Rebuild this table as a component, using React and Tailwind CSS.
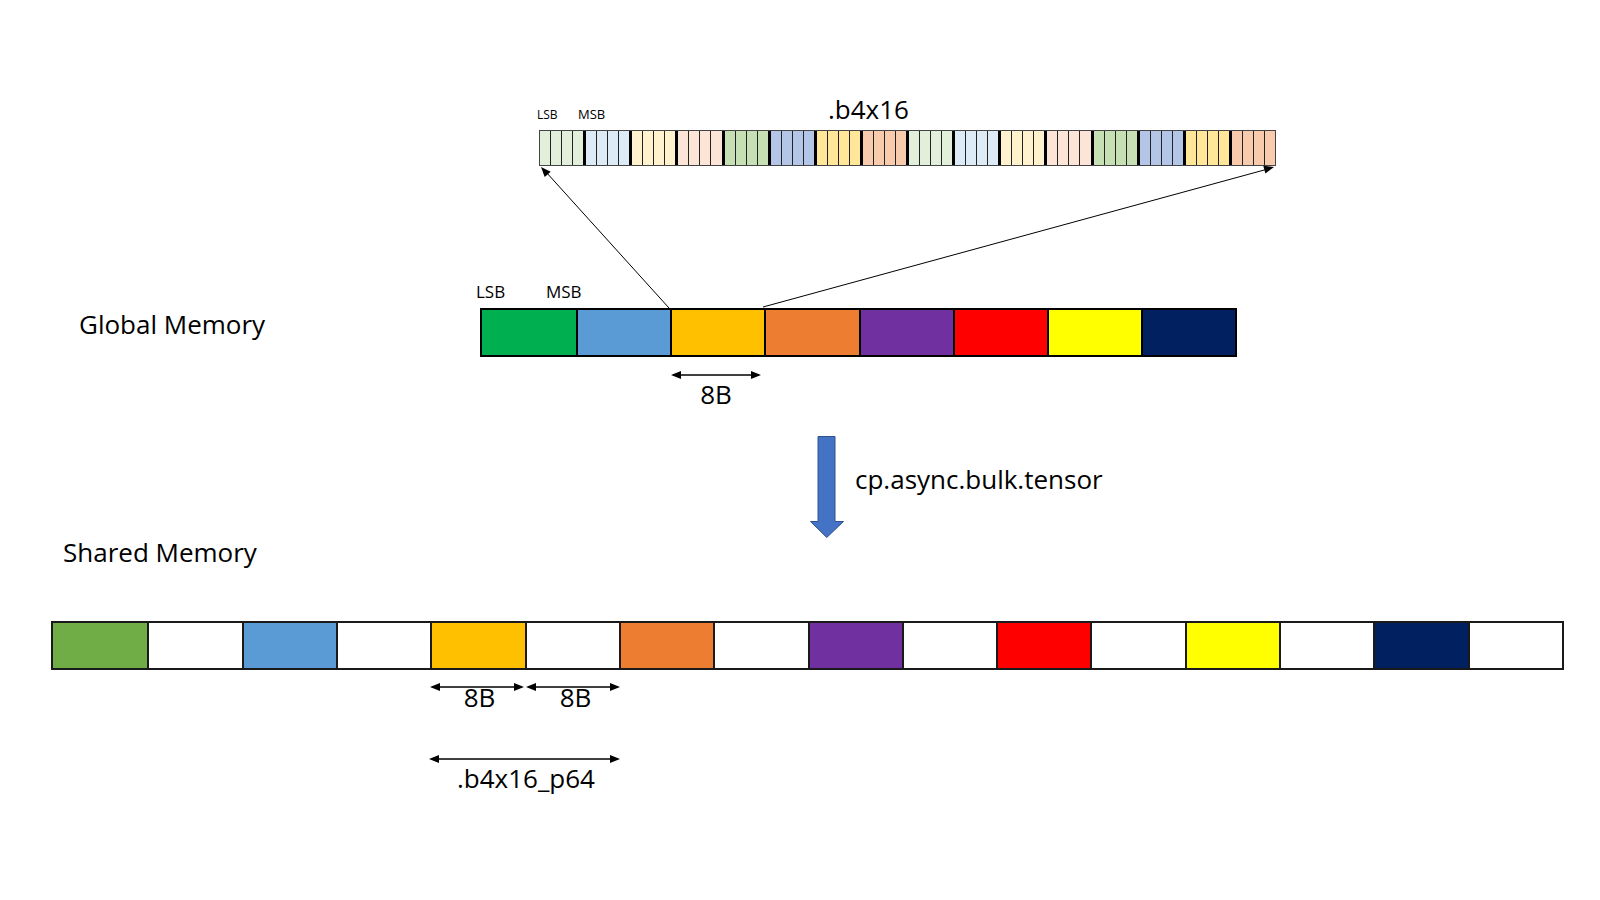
import React from "react";

const TOP_COLORS = [
  "bg-[#E2EFDA]", "bg-[#DDEBF7]", "bg-[#FFF2CC]", "bg-[#FCE4D6]",
  "bg-[#C6E0B4]", "bg-[#B4C6E7]", "bg-[#FFE699]", "bg-[#F8CBAD]",
  "bg-[#E2EFDA]", "bg-[#DDEBF7]", "bg-[#FFF2CC]", "bg-[#FCE4D6]",
  "bg-[#C6E0B4]", "bg-[#B4C6E7]", "bg-[#FFE699]", "bg-[#F8CBAD]",
];

const GLOBAL_COLORS = [
  "bg-[#00B050]", "bg-[#5B9BD5]", "bg-[#FFC000]", "bg-[#ED7D31]",
  "bg-[#7030A0]", "bg-[#FF0000]", "bg-[#FFFF00]", "bg-[#002060]",
];

const SHARED_COLORS = [
  "bg-[#70AD47]", "bg-white", "bg-[#5B9BD5]", "bg-white",
  "bg-[#FFC000]", "bg-white", "bg-[#ED7D31]", "bg-white",
  "bg-[#7030A0]", "bg-white", "bg-[#FF0000]", "bg-white",
  "bg-[#FFFF00]", "bg-white", "bg-[#002060]", "bg-white",
];

function DoubleArrow({ width }) {
  return (
    <svg width={width} height="10" viewBox={`0 0 ${width} 10`} className="block">
      <line x1="8" y1="5" x2={width - 8} y2="5" stroke="#000" strokeWidth="1.5" />
      <polygon points="0,5 10,1 10,9" fill="#000" />
      <polygon points={`${width},5 ${width - 10},1 ${width - 10},9`} fill="#000" />
    </svg>
  );
}

export default function App() {
  return (
    <div className="relative w-[1600px] h-[900px] overflow-hidden bg-white text-black font-['Open_Sans','Noto_Sans',sans-serif]">
      {/* Section A: expanded .b4x16 bit view */}
      <div className="pt-[93px] pl-[539px]">
        <div className="flex items-baseline h-[32px]">
          <span className="w-[41px] text-[12px] leading-none -ml-[2px]">LSB</span>
          <span className="w-[250px] text-[13px] leading-none">MSB</span>
          <span className="text-[26px] leading-[32px]">.b4x16</span>
        </div>
        <div className="mt-[5px] flex w-[737px] h-[36px] border border-[#444]">
          {TOP_COLORS.map((c, g) => (
            <div
              key={g}
              className={
                g === 0
                  ? "flex flex-1"
                  : "flex flex-1 border-l-[3px] border-black"
              }
            >
              {[0, 1, 2, 3].map((s) => (
                <div
                  key={s}
                  className={
                    s === 0
                      ? `flex-1 ${c}`
                      : `flex-1 ${c} border-l-[1.5px] border-[#222]`
                  }
                />
              ))}
            </div>
          ))}
        </div>
      </div>

      {/* Section B: Global memory */}
      <div className="mt-[116px] flex">
        <div className="w-[480px] pl-[79px] pt-[26px]">
          <span className="block text-[26px] leading-[32px]">Global Memory</span>
        </div>
        <div>
          <div className="flex items-baseline h-[20px]">
            <span className="-ml-[4px] w-[70px] text-[17px] leading-[20px]">LSB</span>
            <span className="text-[17px] leading-[20px]">MSB</span>
          </div>
          <div className="mt-[6px] grid grid-cols-8 w-[757px] h-[49px] border-2 border-black">
            {GLOBAL_COLORS.map((c, i) => (
              <div key={i} className={i === 0 ? c : `${c} border-l-2 border-black`} />
            ))}
          </div>
          <div className="ml-[191px] w-[90px] flex flex-col items-center">
            <div className="mt-[13px]">
              <DoubleArrow width={90} />
            </div>
            <span className="text-[26px] leading-[28px]">8B</span>
          </div>
        </div>
      </div>

      {/* Section C: copy instruction arrow */}
      <div className="mt-[28px] flex pl-[810px]">
        <svg width="34" height="102" viewBox="0 0 34 102" className="block shrink-0">
          <polygon
            points="8,0.5 25,0.5 25,85.5 33.5,85.5 16.75,101.5 0.5,85.5 8,85.5"
            fill="#4472C4"
            stroke="#2F528F"
            strokeWidth="1"
          />
        </svg>
        <span className="ml-[11px] mt-[27px] text-[26px] leading-[32px] h-[32px]">cp.async.bulk.tensor</span>
      </div>

      {/* Section D: Shared memory */}
      <div className="-mt-[2px] pl-[63px]">
        <span className="block text-[26px] leading-[32px]">Shared Memory</span>
      </div>
      <div className="mt-[53px] ml-[51px] grid grid-cols-16 w-[1513px] h-[49px] border-2 border-[#1a1a1a]">
        {SHARED_COLORS.map((c, i) => (
          <div key={i} className={i === 0 ? c : `${c} border-l-2 border-[#1a1a1a]`} />
        ))}
      </div>
      <div className="mt-[12px] ml-[429px] flex">
        <div className="w-[95px] flex flex-col items-center">
          <DoubleArrow width={94} />
          <span className="-mt-[5px] ml-[6px] text-[26px] leading-[20px]">8B</span>
        </div>
        <div className="ml-[1px] w-[95px] flex flex-col items-center">
          <DoubleArrow width={94} />
          <span className="-mt-[5px] ml-[6px] text-[26px] leading-[20px]">8B</span>
        </div>
      </div>
      <div className="mt-[47px] ml-[429px]">
        <DoubleArrow width={191} />
      </div>
      <div className="mt-[4px] ml-[457px]">
        <span className="block text-[26px] leading-[20px]">.b4x16_p64</span>
      </div>

      {/* Connector lines overlay */}
      <svg
        className="absolute inset-0 pointer-events-none"
        width="1600"
        height="900"
        viewBox="0 0 1600 900"
      >
        <line x1="669" y1="308" x2="546" y2="172" stroke="#000" strokeWidth="1" />
        <polygon points="541,167 550.7,171.7 544.7,177.1" fill="#000" />
        <line x1="763" y1="307" x2="1266" y2="169.5" stroke="#000" strokeWidth="1" />
        <polygon points="1274,167 1265.4,173.5 1263.3,165.8" fill="#000" />
      </svg>
    </div>
  );
}
